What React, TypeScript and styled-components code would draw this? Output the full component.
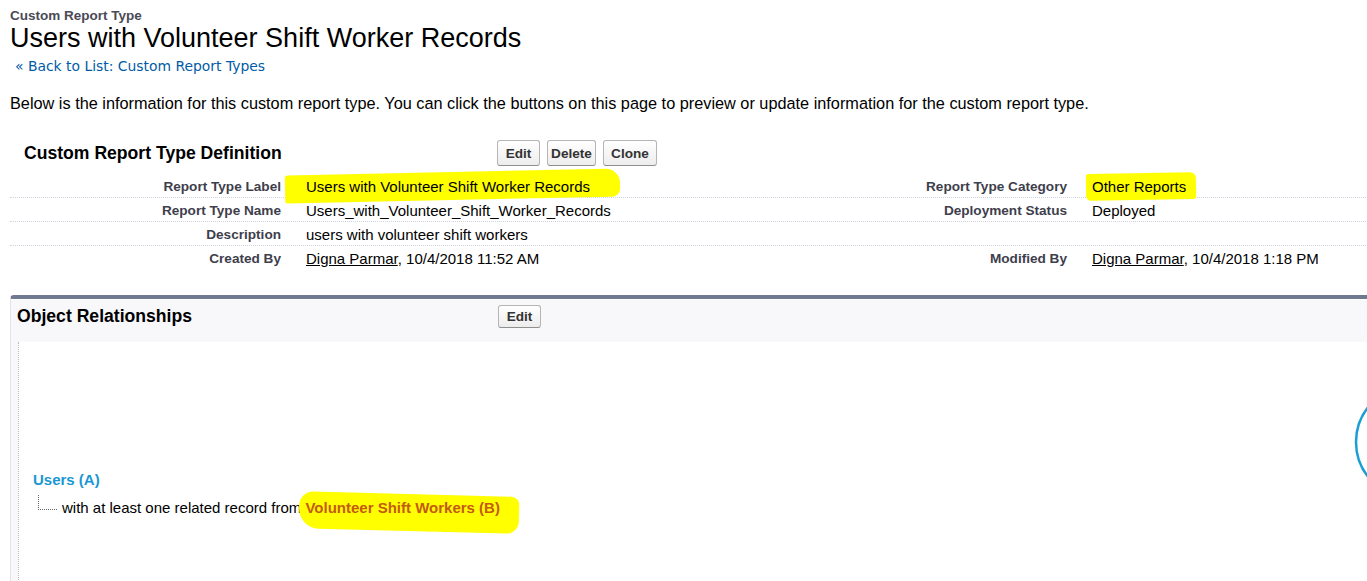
import React from "react";
import styled, { createGlobalStyle } from "styled-components";

const GlobalStyle = createGlobalStyle`
  html, body { margin: 0; padding: 0; background: #ffffff; overflow: hidden; }
  body { font-family: "Liberation Sans", Arial, sans-serif; color: #000; }
`;

const Page = styled.div`
  width: 1572px;
  padding: 8px 0 0 10px;
`;

const Eyebrow = styled.div`
  font-size: 13.5px;
  font-weight: bold;
  line-height: 15px;
  color: #4a4a56;
`;

const Title = styled.h1`
  margin: 0;
  font-size: 27px;
  font-weight: normal;
  line-height: 30px;
  color: #000;
`;

const BackLink = styled.a`
  display: block;
  margin: 4px 0 0 5px;
  font-family: "DejaVu Sans", Verdana, sans-serif;
  font-size: 13.9px;
  line-height: 18px;
  color: #015ba7;
  text-decoration: none;
`;

const Intro = styled.p`
  margin: 18px 0 0 0;
  font-size: 16.3px;
  line-height: 20px;
`;

const DefHeader = styled.div`
  display: flex;
  align-items: center;
  height: 26px;
  margin-top: 27px;
  padding-left: 14px;
`;

const BlockTitle = styled.h2<{ $w: number }>`
  margin: 0;
  width: ${(p) => p.$w}px;
  font-size: 17.6px;
  font-weight: bold;
  line-height: 22px;
  color: #000;
`;

const ButtonGroup = styled.div`
  display: flex;
  gap: 7px;
`;

const Btn = styled.button<{ $w: number; $h: number }>`
  width: ${(p) => p.$w}px;
  height: ${(p) => p.$h}px;
  padding: 0;
  font-family: "Liberation Sans", Arial, sans-serif;
  font-size: 13.6px;
  font-weight: bold;
  color: #333;
  background: linear-gradient(#ffffff, #ededed);
  border: 1px solid #b5b5b5;
  border-bottom-color: #8f8f8f;
  border-radius: 3px;
`;

const DetailTable = styled.div`
  margin-top: 8px;
`;

const DetailRow = styled.div<{ $last?: boolean }>`
  display: grid;
  grid-template-columns: 283px 503px 283px 503px;
  height: 21px;
  padding-top: 2px;
  align-items: center;
  border-bottom: 1px dotted ${(p) => (p.$last ? "transparent" : "#d0d4e0")};
`;

const Label = styled.div`
  text-align: right;
  padding-right: 12px;
  font-size: 13.6px;
  font-weight: bold;
  color: #3e3e4c;
  white-space: nowrap;
`;

const Value = styled.div`
  padding-left: 13px;
  font-size: 15px;
  color: #000;
  white-space: nowrap;
`;

const UserLink = styled.a`
  color: #000;
  text-decoration: underline;
`;

const Highlight = styled.span<{ $l: number; $r: number; $t: number; $b: number; $rot: number; $rad: string }>`
  position: relative;
  z-index: 0;
  &::before {
    content: "";
    position: absolute;
    z-index: -1;
    left: ${(p) => p.$l}px;
    right: ${(p) => p.$r}px;
    top: ${(p) => p.$t}px;
    bottom: ${(p) => p.$b}px;
    background: #ffff00;
    border-radius: ${(p) => p.$rad};
    transform: rotate(${(p) => p.$rot}deg);
  }
`;

const Panel = styled.div`
  margin-top: 25px;
  border-top: 4px solid #6f7990;
  border-left: 1px solid #e3e3e6;
  border-top-left-radius: 4px;
  background: #f8f7f9;
`;

const PanelHeader = styled.div`
  display: flex;
  align-items: flex-start;
  height: 43px;
  box-sizing: border-box;
  padding: 5px 0 0 6px;
  border-top: 1px solid #ffffff;
`;

const PanelBody = styled.div`
  position: relative;
  margin-left: 7px;
  height: 260px;
  box-sizing: border-box;
  padding: 129px 0 0 14px;
  background: #ffffff;
  border-left: 1px dotted #b8b8c0;
`;

const ObjectA = styled.div`
  font-size: 15px;
  font-weight: bold;
  line-height: 18px;
  color: #1b98d1;
`;

const TreeRow = styled.div`
  display: flex;
  align-items: flex-start;
  margin-top: 9px;
  font-size: 15px;
  line-height: 20px;
`;

const Connector = styled.span`
  width: 19px;
  height: 15px;
  margin: -3px 5px 0 5px;
  box-sizing: border-box;
  border-left: 1px dotted #6a6a6a;
  border-bottom: 1px dotted #6a6a6a;
`;

const ObjectB = styled.span`
  font-weight: bold;
  color: #c45a14;
`;

const Diagram = styled.svg`
  position: absolute;
  left: 1333px;
  top: 40px;
`;

export default function App() {
  return (
    <>
      <GlobalStyle />
      <Page>
        <Eyebrow>Custom Report Type</Eyebrow>
        <Title>Users with Volunteer Shift Worker Records</Title>
        <BackLink href="#">« Back to List: Custom Report Types</BackLink>
        <Intro>
          Below is the information for this custom report type. You can click the buttons on this page to preview or
          update information for the custom report type.
        </Intro>

        <DefHeader>
          <BlockTitle $w={473}>Custom Report Type Definition</BlockTitle>
          <ButtonGroup>
            <Btn $w={43} $h={26}>Edit</Btn>
            <Btn $w={49} $h={26}>Delete</Btn>
            <Btn $w={54} $h={26}>Clone</Btn>
          </ButtonGroup>
        </DefHeader>

        <DetailTable>
          <DetailRow>
            <Label>Report Type Label</Label>
            <Value>
              <Highlight $l={-21} $r={-30} $t={-6} $b={-5} $rot={-1.2} $rad="3px 14px 8px 2px">
                Users with Volunteer Shift Worker Records
              </Highlight>
            </Value>
            <Label>Report Type Category</Label>
            <Value>
              <Highlight $l={-6} $r={-10} $t={-5} $b={-5} $rot={-1} $rad="3px 6px 3px 5px">
                Other Reports
              </Highlight>
            </Value>
          </DetailRow>
          <DetailRow>
            <Label>Report Type Name</Label>
            <Value>Users_with_Volunteer_Shift_Worker_Records</Value>
            <Label>Deployment Status</Label>
            <Value>Deployed</Value>
          </DetailRow>
          <DetailRow>
            <Label>Description</Label>
            <Value>users with volunteer shift workers</Value>
            <Label />
            <Value />
          </DetailRow>
          <DetailRow $last>
            <Label>Created By</Label>
            <Value>
              <UserLink href="#">Digna Parmar</UserLink>, 10/4/2018 11:52 AM
            </Value>
            <Label>Modified By</Label>
            <Value>
              <UserLink href="#">Digna Parmar</UserLink>, 10/4/2018 1:18 PM
            </Value>
          </DetailRow>
        </DetailTable>

        <Panel>
          <PanelHeader>
            <BlockTitle $w={481}>Object Relationships</BlockTitle>
            <Btn $w={43} $h={23}>Edit</Btn>
          </PanelHeader>
          <PanelBody>
            <ObjectA>Users (A)</ObjectA>
            <TreeRow>
              <Connector />
              <span>with at least one related record from&nbsp;</span>
              <Highlight $l={-6} $r={-20} $t={-4} $b={-13} $rot={1.5} $rad="14px 8px 12px 20px">
                <ObjectB>Volunteer Shift Workers (B)</ObjectB>
              </Highlight>
            </TreeRow>
            <Diagram width="120" height="120" viewBox="0 0 120 120">
              <circle cx="60" cy="60" r="56" fill="none" stroke="#1a9fd4" strokeWidth="2.5" />
            </Diagram>
          </PanelBody>
        </Panel>
      </Page>
    </>
  );
}
